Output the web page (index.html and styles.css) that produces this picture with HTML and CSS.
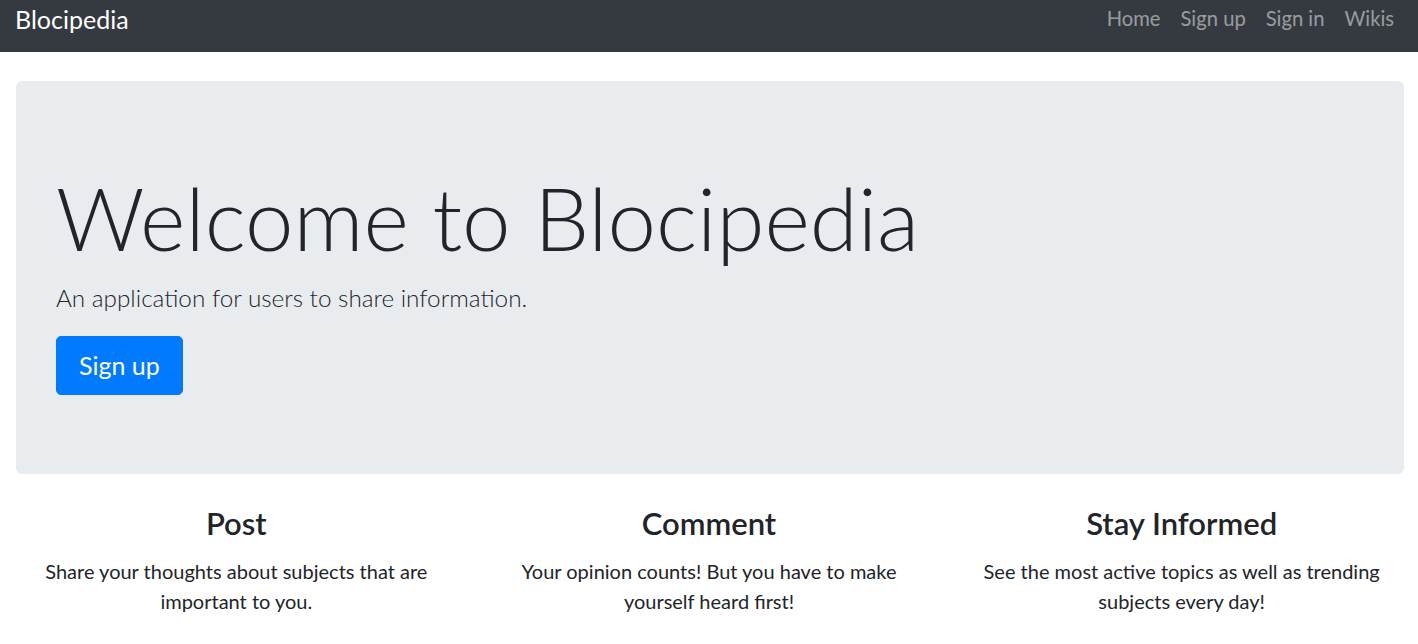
FILE: index.html
```html
<!DOCTYPE html>
<html lang="en">
<head>
<meta charset="utf-8">
<title>Blocipedia</title>
<link rel="stylesheet" href="styles.css">
</head>
<body>
<nav class="navbar">
  <a class="brand" href="#">Blocipedia</a>
  <ul class="nav-links">
    <li><a href="#">Home</a></li>
    <li><a href="#">Sign up</a></li>
    <li><a href="#">Sign in</a></li>
    <li><a href="#">Wikis</a></li>
  </ul>
</nav>
<main class="page">
  <section class="jumbotron">
    <h1 class="display">Welcome to Blocipedia</h1>
    <p class="lead">An application for users to share information.</p>
    <a class="btn-primary" href="#">Sign up</a>
  </section>
  <div class="features">
    <div class="feature">
      <h4 class="feature-title">Post</h4>
      <p class="feature-text">Share your thoughts about subjects that are important to you.</p>
    </div>
    <div class="feature">
      <h4 class="feature-title">Comment</h4>
      <p class="feature-text">Your opinion counts! But you have to make yourself heard first!</p>
    </div>
    <div class="feature">
      <h4 class="feature-title">Stay Informed</h4>
      <p class="feature-text">See the most active topics as well as trending subjects every day!</p>
    </div>
  </div>
</main>
</body>
</html>
```
FILE: styles.css
```css
* { box-sizing: border-box; }
html, body { margin: 0; padding: 0; }
body {
  font-family: "Lato", "Liberation Sans", sans-serif;
  font-size: 20px;
  line-height: 1.5;
  color: #212529;
  background: #fff;
}
a { text-decoration: none; }

.navbar {
  display: flex;
  justify-content: space-between;
  align-items: flex-start;
  height: 52px;
  padding: 0 14px 0 15px;
  background: #343a40;
}
.brand {
  padding-top: 4px;
  font-size: 25px;
  line-height: 30px;
  color: #fff;
}
.nav-links {
  display: flex;
  margin: 0;
  padding: 3px 0 0;
  list-style: none;
}
.nav-links a {
  display: block;
  padding: 0 10px;
  font-size: 20.2px;
  line-height: 30px;
  color: rgba(255, 255, 255, 0.5);
}

.jumbotron {
  margin: 29px 14px 0 16px;
  padding: 85px 40px 79px;
  background: #e9ecef;
  border-radius: 6px;
}
.display {
  margin: 0 0 10px;
  font-size: 87px;
  font-weight: 300;
  line-height: 1.2;
}
.lead {
  margin: 0 0 19px;
  font-size: 24.3px;
  font-weight: 300;
  line-height: 1.5;
}
.btn-primary {
  display: inline-block;
  padding: 10px 22px;
  font-size: 25px;
  line-height: 1.5;
  color: #fff;
  background: #007bff;
  border: 1px solid #007bff;
  border-radius: 5px;
}

.features {
  display: grid;
  grid-template-columns: repeat(3, 1fr);
  margin-top: 31px;
}
.feature {
  padding: 0 15px;
  text-align: center;
}
.feature-title {
  margin: 0 0 13px;
  font-size: 31px;
  font-weight: 600;
  line-height: 1.2;
}
.feature-text {
  margin: 0;
  font-size: 20px;
  line-height: 30px;
}
```
